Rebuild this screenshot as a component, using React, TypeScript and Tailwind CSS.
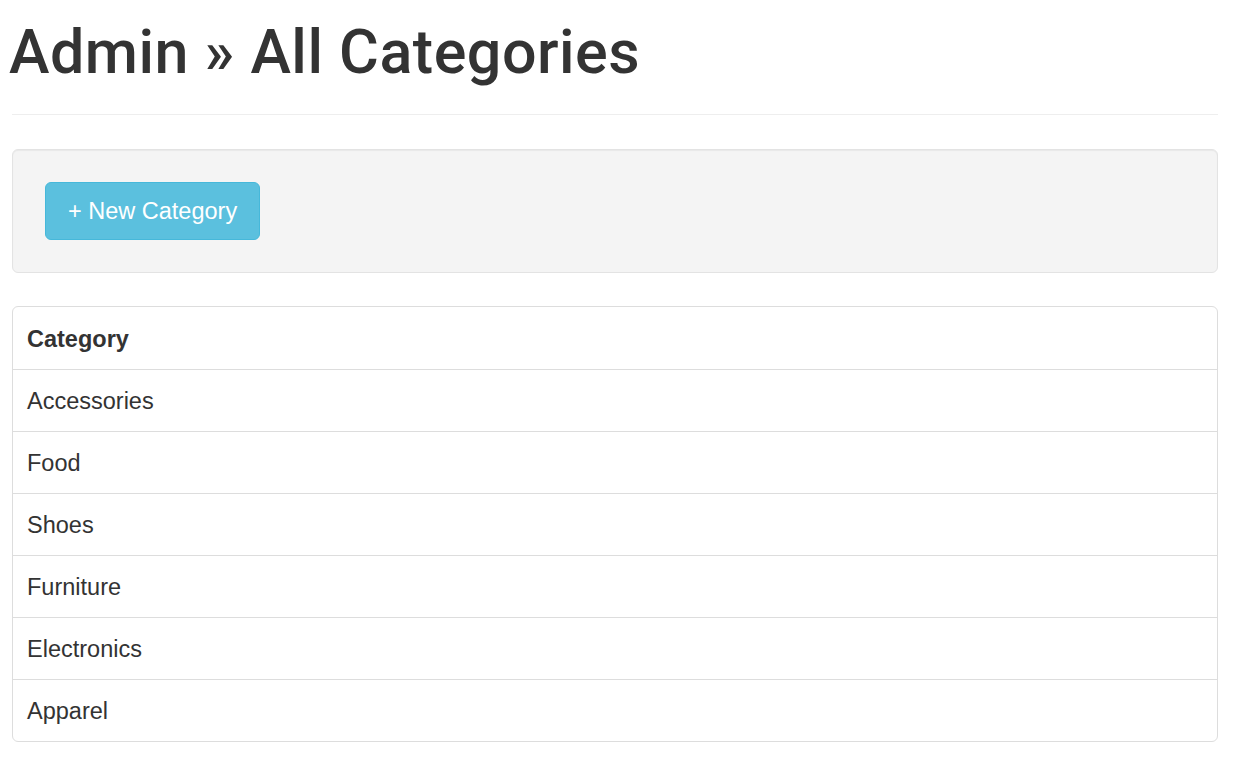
const CATEGORIES = ["Accessories", "Food", "Shoes", "Furniture", "Electronics", "Apparel"];

export default function App() {
  return (
    <div
      className="min-h-screen bg-white pr-[18px] pl-[12px] text-[#333]"
      style={{ fontFamily: '"Liberation Sans", Arial, Helvetica, sans-serif' }}
    >
      {/* Header */}
      <div className="mb-[34px] border-b border-[#eee] pb-[29px]">
        <h1
          className="ml-[-3px] pt-[19px] text-[61px] leading-[66px] font-medium tracking-[0.5px]"
          style={{ fontFamily: 'Roboto, "Liberation Sans", Arial, sans-serif' }}
        >
          Admin » All Categories
        </h1>
      </div>

      {/* Actions well */}
      <div className="mb-[33px] rounded-[6px] border border-[#e3e3e3] bg-[#f4f4f4] px-[32px] pt-[32px] pb-[32px] shadow-[inset_0_1px_1px_rgba(0,0,0,0.05)]">
        <button className="flex h-[58px] items-center rounded-[6px] border border-[#46b8da] bg-[#5bc0de] px-[22px] pt-[2px] text-[23.5px] text-white">
          + New Category
        </button>
      </div>

      {/* Table */}
      <div className="overflow-hidden rounded-[6px] border border-[#ddd]">
        <table className="w-full border-collapse text-left text-[23.5px]">
          <thead>
            <tr>
              <th className="h-[62px] px-[14px] pt-[3px] font-bold">Category</th>
            </tr>
          </thead>
          <tbody>
            {CATEGORIES.map((c) => (
              <tr key={c} className="border-t border-[#ddd]">
                <td className="h-[62px] px-[14px] pt-[3px]">{c}</td>
              </tr>
            ))}
          </tbody>
        </table>
      </div>
    </div>
  );
}
